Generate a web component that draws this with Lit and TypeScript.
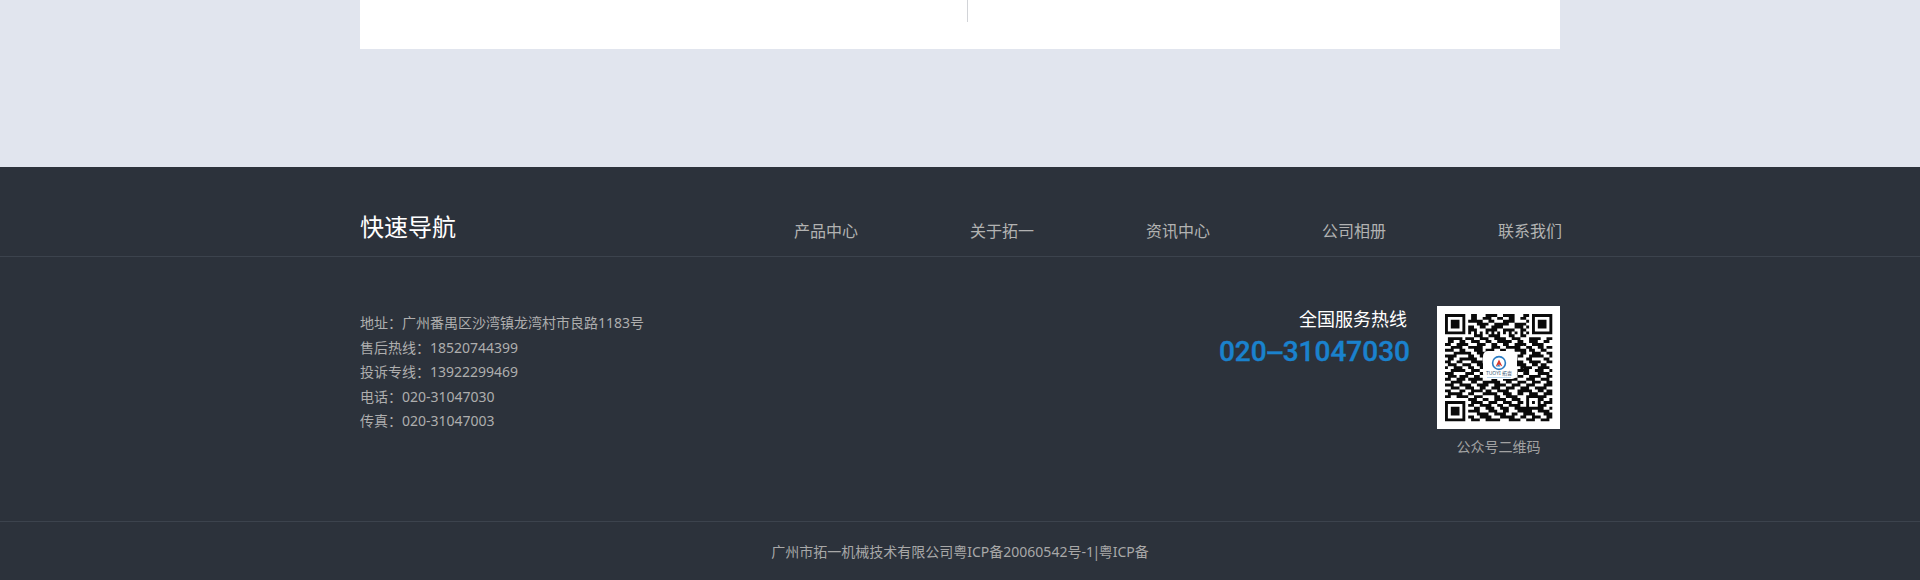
import { LitElement, html, css, svg } from "lit";
import { customElement } from "lit/decorators.js";

const ROWS = [
"0000000001100011110011110001100000000",
"0000000001100111001100110011000000000",
"0000000011111001100011110000100000000",
"0000000000011110011111001111000000000",
"0000000011001100111100001110100000000",
"0000000011100011110011110011000000000",
"0000000010101010101010101010100000000",
"0000000000111001111000110011000000000",
"0111110111001110011110011100011110011",
"0110011001110011001111100110011100110",
"1100111100011100110011001111001111000",
"0011110011111000111001111100110011011",
"1110011000111011100110001111011001100",
"0001111110011110011011100011001110011",
"1111000011001100011111100110011111001",
"0110011111100111100011111000110000110",
"1100110001111011001110011110011110011",
"0111001110011100111111001111001101100",
"1001110011001111000111110011110011110",
"0011111001110011110011000111100111001",
"1110000111001100111100111001100011110",
"0111011100110011100111100110011110011",
"1100111011111000110011111000111001110",
"0011110001100111111001100111001110011",
"1110011110011110011110011100111000111",
"0011100111001100111001110011100111100",
"1100011001111011001111000111110011011",
"0111110011000111110011100110011100111",
"1100111100111000011001111000001001100",
"0000000011100110011110011100001111001",
"0000000001111001110011100110001100111",
"0000000011001111001100111100001111100",
"0000000000110011100111001111000111001",
"0000000011110001110011000111110011110",
"0000000000011110011110011001111000111",
"0000000011001111000111110011001110011",
"0000000001110011111000111100111001110",
];

function matrix(): boolean[][] {
  const m = ROWS.map((r) => [...r].map((c) => c === "1"));
  const finder = (ox: number, oy: number) => {
    for (let y = 0; y < 7; y++)
      for (let x = 0; x < 7; x++) {
        const edge = x === 0 || y === 0 || x === 6 || y === 6;
        const core = x >= 2 && x <= 4 && y >= 2 && y <= 4;
        m[oy + y][ox + x] = edge || core;
      }
    for (let i = -1; i < 8; i++)
      for (const [x, y] of [
        [ox + i, oy - 1],
        [ox + i, oy + 7],
        [ox - 1, oy + i],
        [ox + 7, oy + i],
      ])
        if (m[y] && x >= 0 && x < 37) m[y][x] = false;
  };
  finder(0, 0);
  finder(30, 0);
  finder(0, 30);
  for (let y = 0; y < 5; y++)
    for (let x = 0; x < 5; x++) {
      const d = Math.max(Math.abs(x - 2), Math.abs(y - 2));
      m[28 + y][28 + x] = d !== 1;
    }
  return m;
}

@customElement("app-root")
export class AppRoot extends LitElement {
  static styles = css`
    :host {
      display: block;
      height: 580px;
      overflow: hidden;
      background: #e1e5ee;
      font-family: "Noto Sans", "Noto Sans CJK SC", sans-serif;
    }
    .panel {
      width: 1200px;
      height: 49px;
      margin: 0 auto 118px;
      background: #fff;
      display: flex;
      align-items: flex-start;
    }
    .panel-left {
      width: 607px;
      height: 22px;
      border-right: 1px solid #d2d4d8;
    }
    footer {
      background: #2c323b;
      height: 413px;
      color: #b2b2b2;
    }
    .wrap {
      width: 1200px;
      margin: 0 auto;
      display: flex;
    }
    .nav-row {
      height: 89px;
      border-bottom: 1px solid #3c434d;
    }
    .nav-row .wrap {
      padding-top: 40px;
      justify-content: space-between;
    }
    .title {
      font-size: 24px;
      line-height: 40px;
      color: #fff;
    }
    nav {
      display: flex;
      gap: 112px;
      margin-top: 4px;
      margin-right: -2px;
      font-size: 16px;
      line-height: 40px;
    }
    .main {
      height: 264px;
      border-bottom: 1px solid #3c434d;
    }
    .main .wrap {
      padding-top: 49px;
    }
    .address {
      margin-top: 5px;
      font-size: 14px;
      line-height: 24.5px;
      color: #aeaeae;
    }
    .hotline {
      margin-left: auto;
      margin-right: 27px;
      text-align: right;
    }
    .hotline-label {
      font-size: 18px;
      line-height: 24px;
      color: #fff;
      margin-top: 1px;
      margin-right: 3px;
    }
    .hotline-number {
      margin-top: 3px;
      font-family: Roboto, sans-serif;
      font-weight: 500;
      font-size: 28px;
      line-height: 36px;
      color: #1a82cd;
      -webkit-text-stroke: 0.4px #1a82cd;
      white-space: nowrap;
    }
    .dash {
      display: inline-block;
      width: 16px;
      text-align: center;
      transform: scaleX(2);
    }
    .qr-box {
      width: 123px;
      text-align: center;
    }
    .qr {
      display: block;
      width: 123px;
      height: 123px;
    }
    .qr-caption {
      margin-top: 8px;
      font-size: 14px;
      line-height: 20px;
      color: #a2a2a2;
      white-space: nowrap;
    }
    .copyright {
      height: 58px;
      line-height: 59px;
      text-align: center;
      font-size: 14px;
      color: #a8a8a8;
    }
    .bar {
      margin: 0 -1.5px;
    }
  `;

  private qr() {
    const m = matrix();
    let d = "";
    m.forEach((row, y) =>
      row.forEach((on, x) => {
        if (on) d += `M${x} ${y}h1v1h-1z`;
      })
    );
    return html`<svg class="qr" viewBox="0 0 123 123" aria-label="公众号二维码">
      <rect width="123" height="123" fill="#fff"></rect>
      <g transform="translate(8 8) scale(2.9)">
        <path d=${d} fill="#0a0a0a"></path>
      </g>
      ${svg`
        <rect x="46" y="45" width="34" height="28" rx="5" fill="#fff"></rect>
        <circle cx="62" cy="57" r="6.4" fill="#fff" stroke="#2a7cc4" stroke-width="1.6"></circle>
        <path d="M58.6 60.5 L62 53.5 L65.4 60.5 L62 58.4 Z" fill="#d8392f"></path>
        <path d="M59 60.6 L62 58.4 L63.4 60.6 Z" fill="#2a7cc4"></path>
        <text x="62" y="68.5" text-anchor="middle" font-size="5" fill="#3b5a78">TUOYI 拓壹</text>
        <rect x="50" y="71" width="24" height="0.8" fill="#a9cdea"></rect>
      `}
    </svg>`;
  }

  render() {
    return html`
      <div class="panel"><div class="panel-left"></div></div>
      <footer>
        <div class="nav-row">
          <div class="wrap">
            <div class="title">快速导航</div>
            <nav>
              <span>产品中心</span>
              <span>关于拓一</span>
              <span>资讯中心</span>
              <span>公司相册</span>
              <span>联系我们</span>
            </nav>
          </div>
        </div>
        <div class="main">
          <div class="wrap">
            <div class="address">
              <div>地址：广州番禺区沙湾镇龙湾村市良路1183号</div>
              <div>售后热线：18520744399</div>
              <div>投诉专线：13922299469</div>
              <div>电话：020-31047030</div>
              <div>传真：020-31047003</div>
            </div>
            <div class="hotline">
              <div class="hotline-label">全国服务热线</div>
              <div class="hotline-number">020<span class="dash">-</span>31047030</div>
            </div>
            <div class="qr-box">
              ${this.qr()}
              <div class="qr-caption">公众号二维码</div>
            </div>
          </div>
        </div>
        <div class="copyright">广州市拓一机械技术有限公司粤ICP备20060542号-1<span class="bar">|</span>粤ICP备</div>
      </footer>
    `;
  }
}
